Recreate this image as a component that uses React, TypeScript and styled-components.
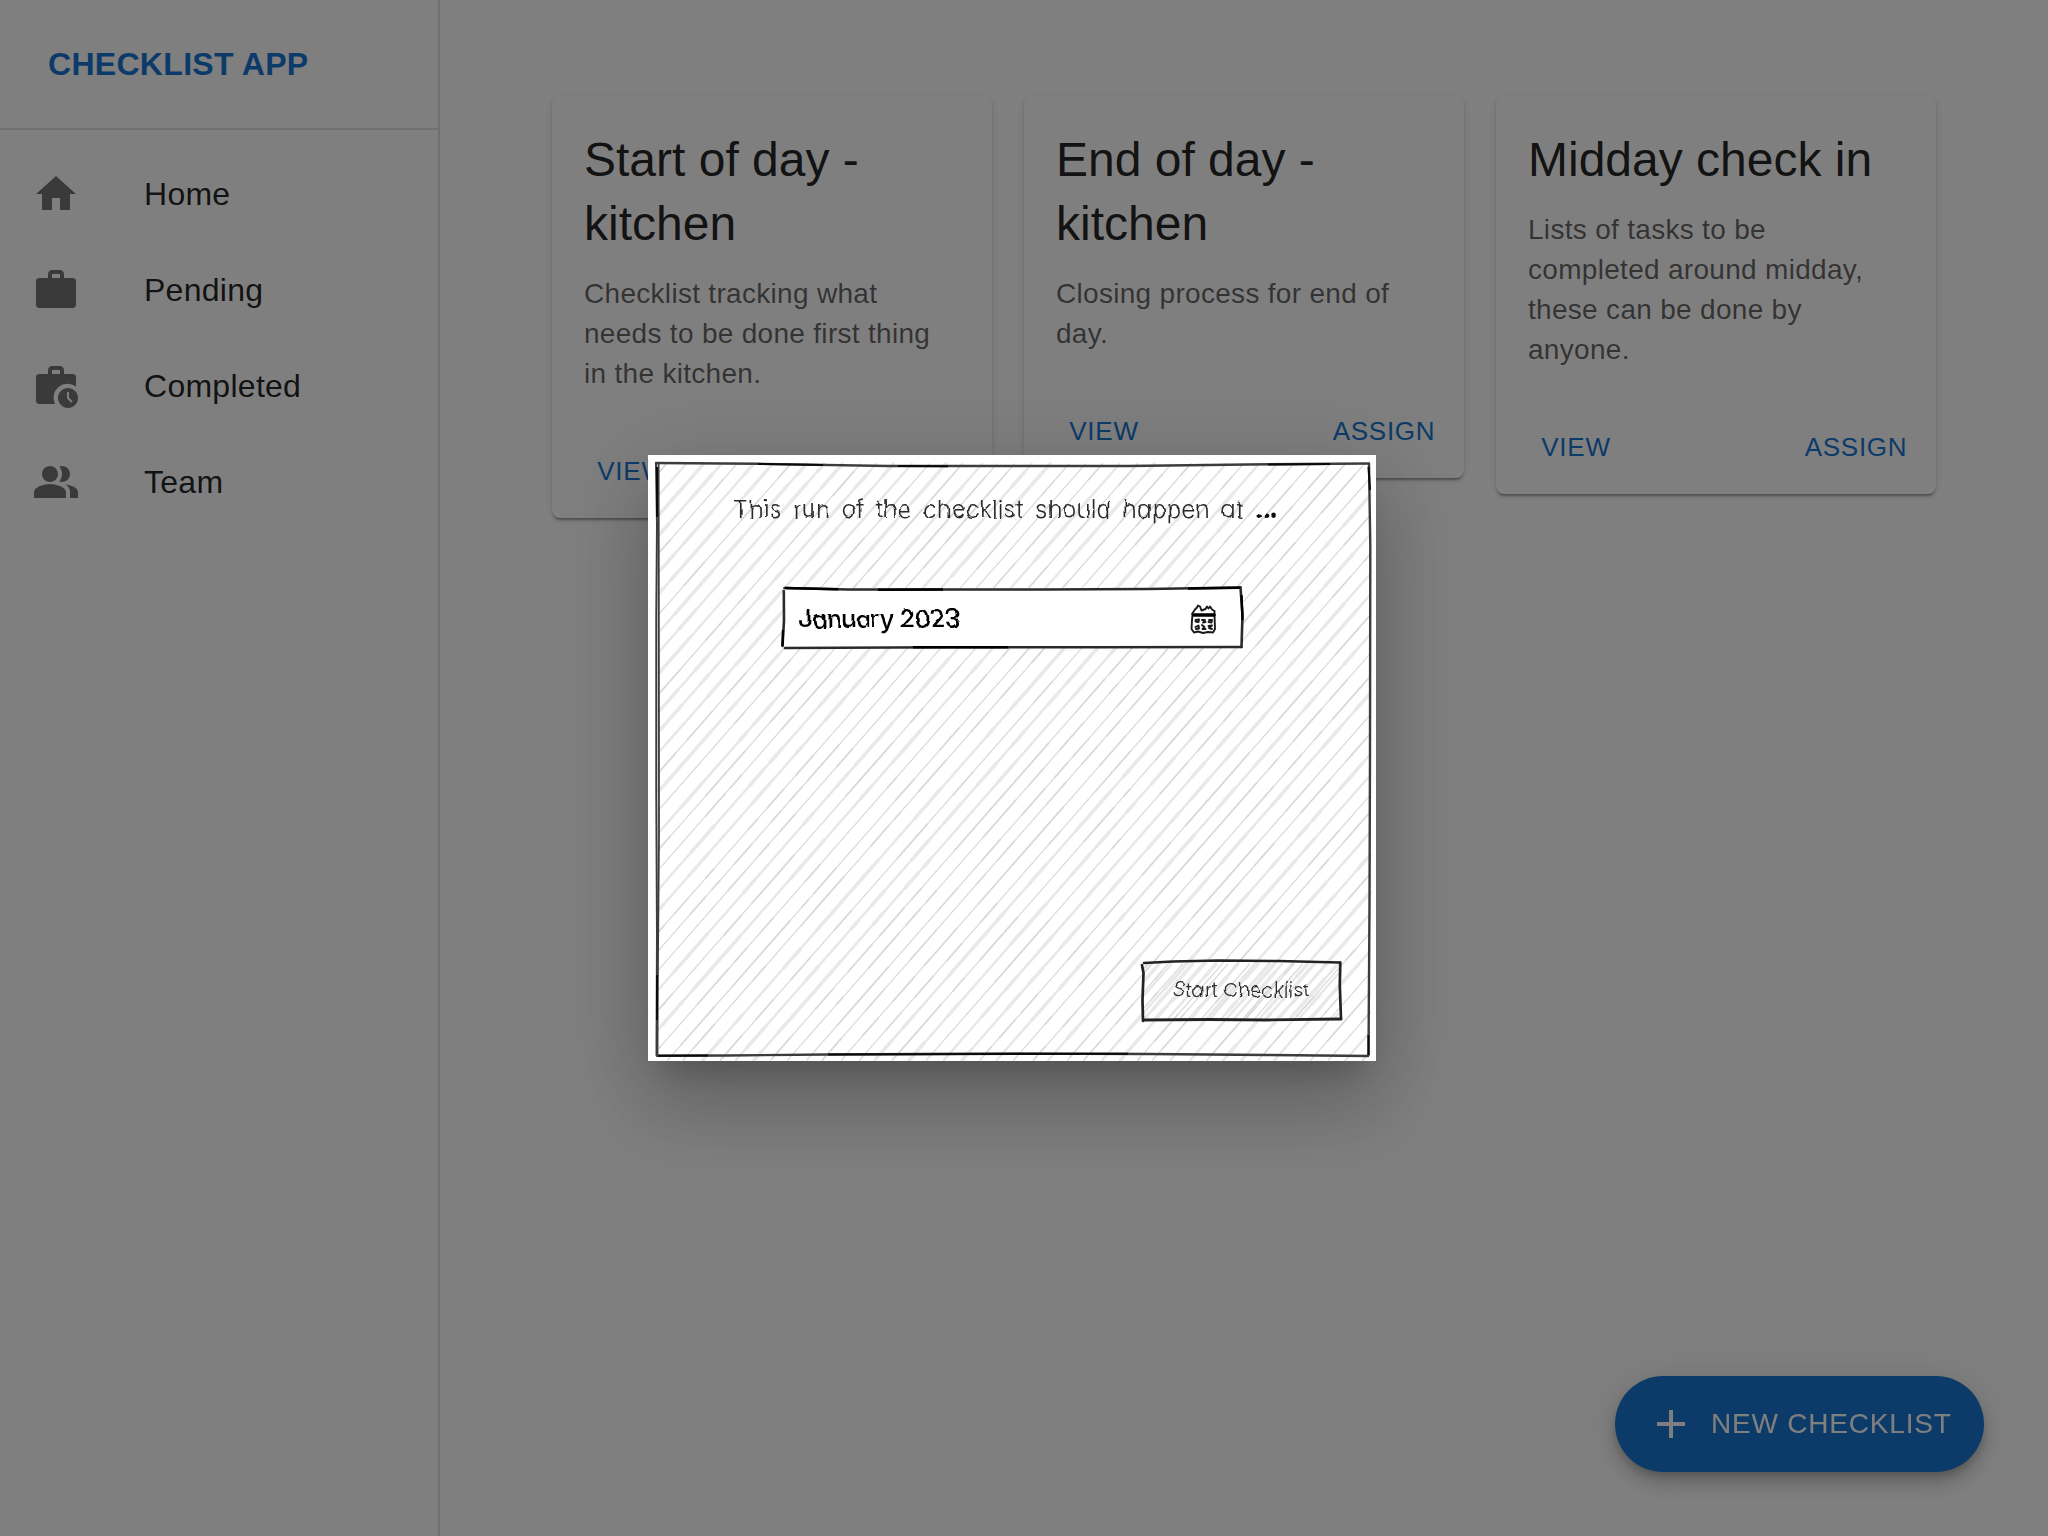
import React from "react";
import styled, { createGlobalStyle } from "styled-components";

const GlobalStyle = createGlobalStyle`
  *, *::before, *::after { box-sizing: border-box; }
  html, body { margin: 0; padding: 0; background: #fff; }
  body {
    font-family: "Liberation Sans", Arial, Helvetica, sans-serif;
    color: rgba(0, 0, 0, 0.87);
    overflow: hidden;
  }
`;

const primary = "#1976d2";
const handwriting = `"Inter", "Liberation Sans", sans-serif`;

const Page = styled.div`
  display: flex;
  width: 2048px;
  height: 1536px;
  background: #fff;
`;

const Sidebar = styled.aside`
  width: 440px;
  flex: none;
  border-right: 2px solid rgba(0, 0, 0, 0.12);
`;

const Brand = styled.div`
  height: 130px;
  padding: 0 48px;
  display: flex;
  align-items: center;
  border-bottom: 2px solid rgba(0, 0, 0, 0.12);
  color: ${primary};
  font-size: 32px;
  font-weight: 700;
  line-height: 48px;
  letter-spacing: 0.3px;
`;

const NavList = styled.nav`
  padding: 16px 0;
`;

const NavItem = styled.a`
  display: flex;
  align-items: center;
  height: 96px;
  padding: 0 32px;
  font-size: 32px;
  line-height: 48px;
  letter-spacing: 0.27px;
`;

const NavIcon = styled.span`
  display: flex;
  width: 112px;
  color: rgba(0, 0, 0, 0.54);
`;

const Main = styled.main`
  flex: 1;
  display: flex;
  align-items: flex-start;
  gap: 32px;
  padding: 96px 112px;
`;

const Card = styled.article`
  width: 440px;
  border-radius: 8px;
  background: #fff;
  box-shadow: 0 4px 2px -2px rgba(0, 0, 0, 0.2), 0 2px 2px 0 rgba(0, 0, 0, 0.14),
    0 2px 6px 0 rgba(0, 0, 0, 0.12);
`;

const CardContent = styled.div`
  padding: 32px 32px 31px;
`;

const CardTitle = styled.h2`
  margin: 0 0 17.8px;
  font-size: 48px;
  font-weight: 400;
  line-height: 64px;
`;

const CardText = styled.p`
  margin: 0;
  color: rgba(0, 0, 0, 0.6);
  font-size: 28px;
  line-height: 40.04px;
  letter-spacing: 0.3px;
`;

const CardActions = styled.div`
  display: flex;
  justify-content: space-between;
  padding: 16px;
`;

const TextButton = styled.button`
  min-width: 128px;
  padding: 8px 10px;
  border: 0;
  background: none;
  color: ${primary};
  font: inherit;
  font-size: 26px;
  line-height: 45.5px;
  letter-spacing: 0.75px;
  text-transform: uppercase;
`;

const Fab = styled.button`
  position: fixed;
  right: 64px;
  bottom: 64px;
  width: 369px;
  height: 96px;
  padding: 0 32px;
  display: flex;
  align-items: center;
  gap: 16px;
  border: 0;
  border-radius: 48px;
  background: ${primary};
  color: #fff;
  font: inherit;
  font-size: 28px;
  letter-spacing: 0.8px;
  white-space: nowrap;
  text-transform: uppercase;
  box-shadow: 0 6px 10px -2px rgba(0, 0, 0, 0.2), 0 12px 20px 0 rgba(0, 0, 0, 0.14),
    0 2px 36px 0 rgba(0, 0, 0, 0.12);
`;

const Backdrop = styled.div`
  position: fixed;
  inset: 0;
  padding: 455px 0 0 648px;
  background: rgba(0, 0, 0, 0.5);
`;

const Dialog = styled.section`
  position: relative;
  width: 728px;
  height: 606px;
  padding: 36px 35px 40px;
  display: flex;
  flex-direction: column;
  background: #fff;
  color: #2a2a2a;
  font-family: ${handwriting};
  font-feature-settings: "cv11", "ss03";
  box-shadow: 0 22px 30px -14px rgba(0, 0, 0, 0.2), 0 48px 76px 6px rgba(0, 0, 0, 0.14),
    0 18px 92px 16px rgba(0, 0, 0, 0.12);
`;

const Sketch = styled.svg`
  position: absolute;
  inset: 0;
`;

const DialogTitle = styled.h3`
  position: relative;
  margin: 0 0 0 50px;
  font-size: 24.5px;
  font-weight: 350;
  line-height: 36px;
  letter-spacing: 0px;
  word-spacing: 4.4px;
  white-space: nowrap;
  filter: url(#pencil);
`;

const Dots = styled.span`
  color: #111;
  font-weight: 800;
  letter-spacing: -1.3px;
`;

const MonthField = styled.div`
  position: relative;
  display: flex;
  align-items: center;
  justify-content: space-between;
  width: 458px;
  height: 60px;
  margin: 60px 0 0 101px;
  padding: 3px 26px 0 14px;
  color: #000;
  font-size: 25px;
  font-weight: 500;
  letter-spacing: -0.6px;
`;

const MonthText = styled.span`
  filter: url(#pencil);
`;

const StartButton = styled.button`
  position: relative;
  align-self: flex-end;
  width: 199px;
  height: 60px;
  margin-top: auto;
  padding: 0 0 2px;
  border: 0;
  background: none;
  color: #2e2e2e;
  font: inherit;
  font-size: 20px;
  font-weight: 320;
  letter-spacing: 0.1px;
  white-space: nowrap;
  filter: url(#pencil);
`;

const icons = {
  home: "M10 20v-6h4v6h5v-8h3L12 3 2 12h3v8z",
  pending:
    "M20.5 6H16V4c0-1.1-.9-2-2-2h-4c-1.1 0-2 .9-2 2v2H3.5C2.67 6 2 6.67 2 7.500v12c0 .83.67 1.500 1.500 1.500h17c.83 0 1.500-.67 1.500-1.500v-12C22 6.670 21.330 6 20.500 6zM14 6h-4V4h4z",
  history:
    "M11.500 21H3.500C2.670 21 2 20.330 2 19.500v-12C2 6.670 2.670 6 3.500 6H8V4c0-1.100.900-2 2-2h4c1.100 0 2 .900 2 2v2h4.500C21.330 6 22 6.670 22 7.500v4.780A7 7 0 0 0 11.500 21zM14 6V4h-4v2zM18 13c-2.760 0-5 2.240-5 5s2.240 5 5 5 5-2.240 5-5-2.240-5-5-5zm1.650 7.350L17.500 18.200V15h1v2.790l1.850 1.850z",
  people:
    "M16.670 13.130C18.040 14.060 19 15.320 19 17v3h4v-3c0-2.180-3.570-3.470-6.330-3.870zM15 12c2.210 0 4-1.790 4-4s-1.790-4-4-4c-.47 0-.91.100-1.330.240C14.500 5.270 15 6.580 15 8s-.5 2.730-1.330 3.760c.42.140.86.240 1.330.240zM9 12c2.210 0 4-1.790 4-4s-1.790-4-4-4-4 1.790-4 4 1.790 4 4 4zM9 13c-2.670 0-8 1.340-8 4v3h16v-3c0-2.660-5.330-4-8-4z",
  add: "M19 13h-6v6h-2v-6H5v-2h6V5h2v6h6v2z",
};

function Icon({ path }: { path: string }) {
  return (
    <svg width="48" height="48" viewBox="0 0 24 24" fill="currentColor" fillRule="evenodd">
      <path d={path} />
    </svg>
  );
}

function createRandom(seed: number) {
  let s = seed;
  return () => {
    s = (s * 16807) % 2147483647;
    return s / 2147483647;
  };
}

interface Area {
  x: number;
  y: number;
  w: number;
  h: number;
}

/* Diagonal pencil strokes, each made of short pieces that vary in width and tone. */
function Hatch({ area, gap, seed }: { area: Area; gap: number; seed: number }) {
  const random = createRandom(seed);
  const slope = 1.14;
  const right = area.x + area.w;
  const bottom = area.y + area.h;
  const strokes: React.ReactElement[] = [];
  for (let start = area.x + gap / 2; start < right + area.h / slope; start += gap) {
    const top = start + (random() - 0.5) * 3;
    const soft = random();
    let y = area.y + Math.max(0, (top - right) * slope);
    const end = Math.min(bottom, area.y + (top - area.x) * slope);
    while (y < end) {
      const next = Math.min(end, y + 6 + random() * 16);
      const wide = random() < 0.45;
      const thick = soft > 0.5;
      const width = thick ? (wide ? 3.6 : 2.4) : wide ? 1.8 : 1.2;
      const tone = thick ? (wide ? "#e9e9e9" : "#e7e7e7") : wide ? "#d9d9d9" : "#dadada";
      strokes.push(
        <line
          key={`${start}-${y}`}
          x1={top - (y - area.y) / slope}
          y1={y}
          x2={top - (next - area.y) / slope}
          y2={next}
          stroke={tone}
          strokeWidth={width}
        />
      );
      y = next;
    }
  }
  return <g strokeLinecap="round">{strokes}</g>;
}

function DialogSketch() {
  return (
    <Sketch width="728" height="606" viewBox="0 0 728 606" fill="none">
      <defs>
        <filter id="pencil" x="-2%" y="-10%" width="104%" height="120%">
          <feTurbulence type="fractalNoise" baseFrequency="0.07" numOctaves="1" seed="5" result="noise" />
          <feDisplacementMap in="SourceGraphic" in2="noise" scale="5" xChannelSelector="R" yChannelSelector="G" />
        </filter>
      </defs>
      <Hatch area={{ x: 11, y: 9, w: 711, h: 596 }} gap={17.4} seed={421} />
      <g stroke="#3c3c3c" strokeWidth="2.400" strokeLinecap="round">
        <path d="M8 8 L110 8.800 L240 11 L480 11 L600 9.500 L721 8.500" />
        <path d="M8 9 L9 70 L8.300 160 L8.300 340 L9 480 L8.500 600" strokeWidth="2" />
        <path d="M10.600 9 L10.800 130 L11 380 L10 500 L9.500 600" strokeWidth="1.800" />
        <path d="M721 9 L722.300 90 L722 300 L721.500 450 L720.500 600" />
        <path d="M9 600.800 L80 600.500 L180 599.500 L370 598.500 L500 599 L620 600 L720 601" />
      </g>
      <g stroke="#0a0a0a" strokeWidth="2">
        <path d="M110 9 L175 10 M620 9.500 L682 9 M250 11 L300 11.200" />
        <path d="M9 12 L9 62 M9 520 L9 565 M720.500 12 L722 35" />
        <path d="M180 599.500 L480 598.700 M10 600.800 L60 600.500 M720.500 580 L720.500 600" />
      </g>
      <path d="M136 133 L593 133 L594 192 L135 192 Z" fill="#fff" />
      <g stroke="#2a2a2a" strokeWidth="2.600" strokeLinecap="round">
        <path d="M136.500 133 L200 134.500 L400 134.500 L500 134 L592.500 132.500" />
        <path d="M592.500 132.500 L594.500 160 L593.500 192" />
        <path d="M137 193 L300 192.300 L450 192.300 L593.500 192" />
        <path d="M135.800 136 L136 165 L134.500 191" />
      </g>
      <g stroke="#000" strokeWidth="2.400">
        <path d="M137 133 L190 134.300 M230 134.800 L295 134.500 M540 133.500 L592 132.700" />
        <path d="M593.500 140 L594.500 165 M135 175 L134.500 191 M265 192.300 L360 192.300" />
      </g>
      <Hatch area={{ x: 496, y: 509, w: 194, h: 54 }} gap={11} seed={77} />
      <g stroke="#222" strokeWidth="2.400" strokeLinecap="round">
        <path d="M496 508 L525 506.500 L570 505.500 L630 506 L692 507.500" />
        <path d="M692.300 507.500 L691.800 530 L693 564" strokeWidth="2.700" />
        <path d="M495.500 565 L560 564.500 L620 565 L693 564" strokeWidth="2.800" />
        <path d="M494 510 L495.500 518 L494.500 545 L495 566" strokeWidth="2.700" />
      </g>
    </Sketch>
  );
}

function CalendarSketch() {
  return (
    <svg width="26" height="32" viewBox="0 0 26 32" fill="none" stroke="#1a1a1a" strokeWidth="1.900" strokeLinecap="round" strokeLinejoin="round">
      <path d="M2 11 L5 6.500 L7 4.500 L8 2.500 L10 3.500 L11.500 7.500 L15.500 6 L17 3.500 L18.500 5.500 L20 3.500 L22 6.500 L24.500 8 L24.500 12" />
      <path d="M2.500 12 L2 17 L1.500 26 L4 29.500 L8 28.500 L13 30 L18 29 L23 29.500 L25 26 L24.500 12" />
      <path d="M4 12 H24" stroke="#000" strokeWidth="3.400" />
      <path d="M5.500 17 L9 16.500 L8.500 19 L5.500 18.500 M12 17 L15 17 L13 19.500 L15.500 19 M19 17 L22 17 L21.500 19.500 L18.500 19" />
      <path d="M5.500 24 L8.500 22.500 L9 25.500 L6 26 M12 22 L14.500 24 L12.500 26 L15.500 26 M18.500 23 L22 22.500 L19 25 L22 26" />
    </svg>
  );
}

const navigation = [
  { label: "Home", icon: icons.home },
  { label: "Pending", icon: icons.pending },
  { label: "Completed", icon: icons.history },
  { label: "Team", icon: icons.people },
];

const checklists = [
  {
    title: "Start of day - kitchen",
    text: "Checklist tracking what needs to be done first thing in the kitchen.",
  },
  { title: "End of day - kitchen", text: "Closing process for end of day." },
  {
    title: "Midday check in",
    text: "Lists of tasks to be completed around midday, these can be done by anyone.",
  },
];

export default function App() {
  return (
    <>
      <GlobalStyle />
      <Page>
        <Sidebar>
          <Brand>CHECKLIST APP</Brand>
          <NavList>
            {navigation.map((item) => (
              <NavItem key={item.label}>
                <NavIcon>
                  <Icon path={item.icon} />
                </NavIcon>
                {item.label}
              </NavItem>
            ))}
          </NavList>
        </Sidebar>
        <Main>
          {checklists.map((list) => (
            <Card key={list.title}>
              <CardContent>
                <CardTitle>{list.title}</CardTitle>
                <CardText>{list.text}</CardText>
              </CardContent>
              <CardActions>
                <TextButton>View</TextButton>
                <TextButton>Assign</TextButton>
              </CardActions>
            </Card>
          ))}
        </Main>
        <Fab>
          <Icon path={icons.add} />
          New Checklist
        </Fab>
      </Page>
      <Backdrop>
        <Dialog>
          <DialogSketch />
          <DialogTitle>
            This run of the checklist should happen at <Dots>...</Dots>
          </DialogTitle>
          <MonthField>
            <MonthText>January 2023</MonthText>
            <CalendarSketch />
          </MonthField>
          <StartButton>Start Checklist</StartButton>
        </Dialog>
      </Backdrop>
    </>
  );
}
